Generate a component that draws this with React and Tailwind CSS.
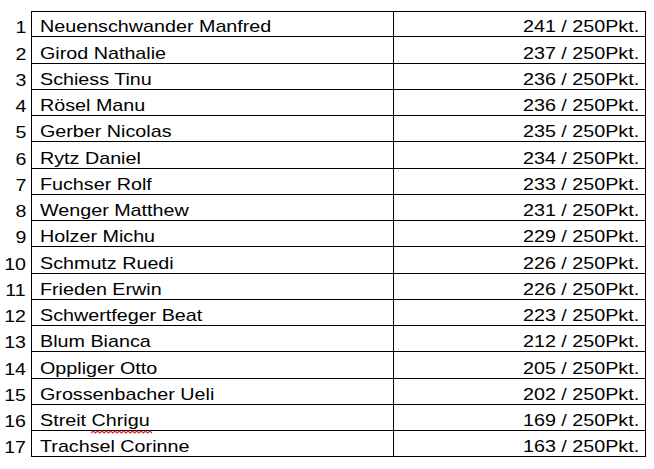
import React from 'react'

const rows = [
    ["Neuenschwander Manfred", 241],
    ["Girod Nathalie", 237],
    ["Schiess Tinu", 236],
    ["Rösel Manu", 236],
    ["Gerber Nicolas", 235],
    ["Rytz Daniel", 234],
    ["Fuchser Rolf", 233],
    ["Wenger Matthew", 231],
    ["Holzer Michu", 229],
    ["Schmutz Ruedi", 226],
    ["Frieden Erwin", 226],
    ["Schwertfeger Beat", 223],
    ["Blum Bianca", 212],
    ["Oppliger Otto", 205],
    ["Grossenbacher Ueli", 202],
    ["Streit Chrigu", 169],
    ["Trachsel Corinne", 163],
]

const Squiggle = () => {
    let d = "M0 3"
    for (let x = 0; x < 56; x += 4) d += ` L${x + 2} 1 L${x + 4} 3`
    return (
        <svg className="absolute left-0 bottom-[-4px] w-[105%] h-[4px]" viewBox="0 0 56 4" preserveAspectRatio="none">
            <path d={d} fill="none" stroke="#e02424" strokeWidth="1.1" vectorEffect="non-scaling-stroke" />
        </svg>
    )
}

const Name = ({ name }) => {
    // spell-check squiggle only under "Chrigu"
    if (name === "Streit Chrigu") {
        return (
            <>
                Streit{" "}
                <span className="relative">
                    Chrigu
                    <Squiggle />
                </span>
            </>
        )
    }
    return name
}

const App = () => {
    return (
        <div className="w-[654px] h-[469px] bg-white pt-[11px] font-['Liberation_Sans',Arial,sans-serif] text-[17px] leading-none text-black overflow-hidden">
            {rows.map(([name, pts], i) => (
                <div key={i} className="flex h-[26.25px]">
                    <div className="w-[31px] flex items-end justify-end pr-[5px] pb-[1px]">
                        <span className="inline-block origin-right scale-x-[1.15]">{i + 1}</span>
                    </div>
                    <div className={`w-[362px] flex items-end pl-[8px] pb-[1px] border-l border-b border-black ${i === 0 ? "border-t" : ""}`}>
                        <span className="inline-block origin-left scale-x-[1.16] whitespace-nowrap">
                            <Name name={name} />
                        </span>
                    </div>
                    <div className={`w-[253px] flex items-end justify-end pr-[6px] pb-[1px] border-l border-r border-b border-black ${i === 0 ? "border-t" : ""}`}>
                        <span className="inline-block origin-right scale-x-[1.16] whitespace-nowrap">{pts} / 250Pkt.</span>
                    </div>
                </div>
            ))}
        </div>
    )
}

export default App
